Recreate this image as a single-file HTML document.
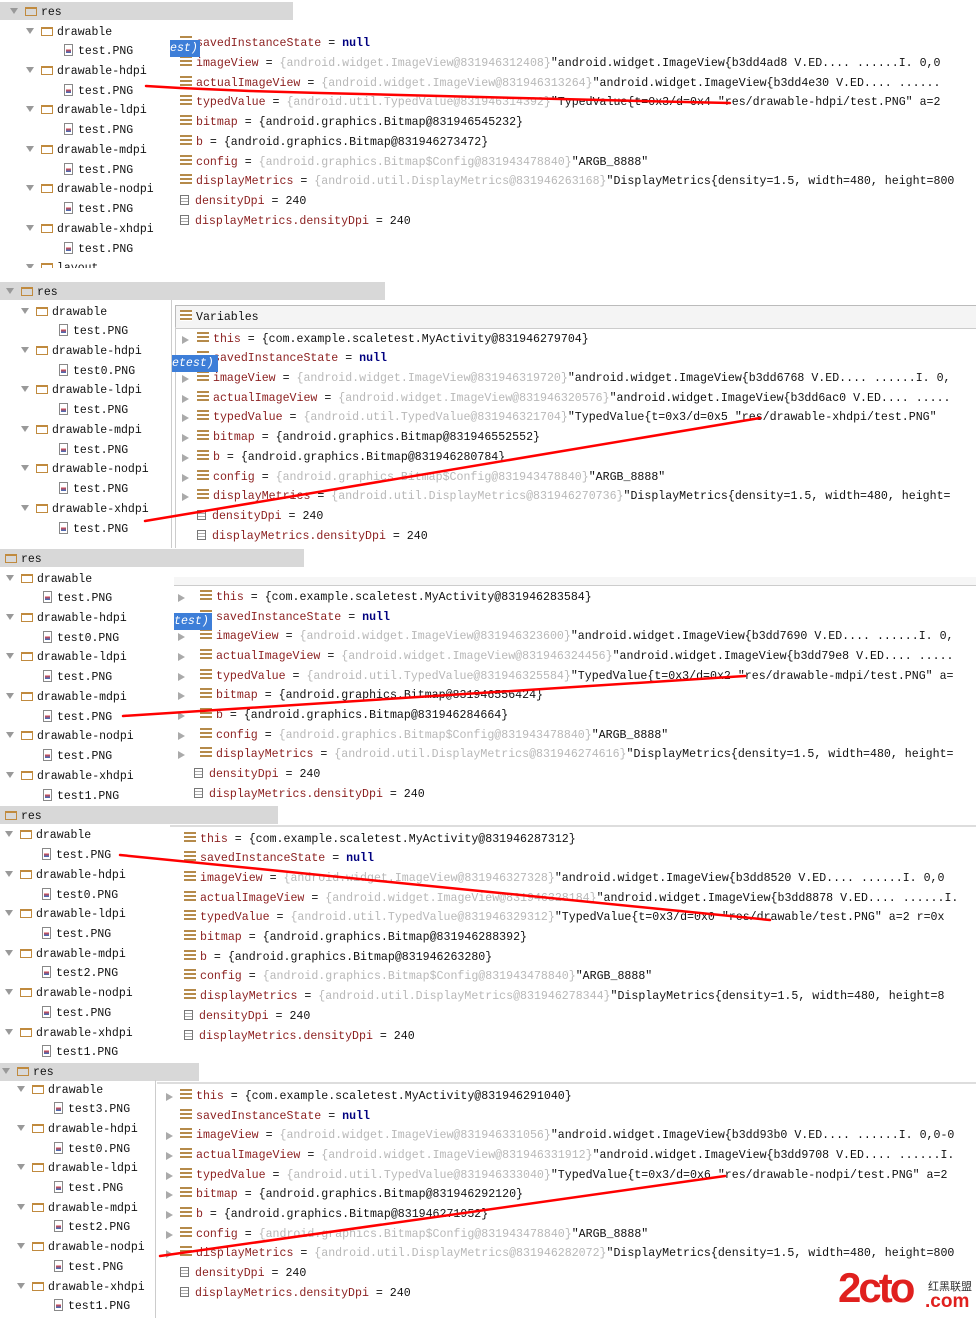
<!DOCTYPE html>
<html><head><meta charset="utf-8"><style>
html,body{margin:0;padding:0;background:#fff;width:976px;height:1318px;overflow:hidden;position:relative}
div{position:absolute}
.t,.r{white-space:pre;font-family:"Liberation Mono","DejaVu Sans Mono",monospace;color:#111;height:16px;line-height:16px;margin-top:2px}
.t{font-size:11.5px}
.r{font-size:11.6px}
.hdr{background:#d8d8d8;height:18px}
.fo{display:inline-block;width:12px;height:9px;border:1.5px solid #c08a3e;border-top-width:2.5px;box-sizing:border-box;vertical-align:-1px;margin-right:4px}
.fi{display:inline-block;width:9px;height:12px;border:1px solid #888;box-sizing:border-box;vertical-align:-2px;margin-right:5px;background:linear-gradient(#fff 45%,#d44 45%,#3a6fc0 80%,#fff 80%);background-size:5px 10px;background-repeat:no-repeat;background-position:1px 0}
.tr{display:inline-block;width:0;height:0;border-left:4px solid transparent;border-right:4px solid transparent;border-top:6px solid #999;margin-right:7px;vertical-align:1px}
.ic{display:inline-block;width:12px;height:11px;background:repeating-linear-gradient(#b58a4a 0 2px,#fff 2px 4px);vertical-align:-1px;margin-right:4px}
.ic2{display:inline-block;width:9px;height:10px;border:1px solid #777;box-sizing:border-box;vertical-align:-1px;margin-right:6px;background:repeating-linear-gradient(#fff 0 2px,#aaa 2px 3px)}
.ar{position:absolute;width:0;height:0;border-top:4px solid transparent;border-bottom:4px solid transparent;border-left:7px solid #aaa;top:4px}
.n{color:#8b1f1f}
.g{color:#b8b8b8}
.k{color:#000080;font-weight:bold}
.blue{background:#3d7ed8;color:#fff;font-style:italic;font-family:"Liberation Mono",monospace;font-size:11.6px;line-height:17px;height:17px;white-space:pre;overflow:hidden}
</style></head><body>

<!-- ============ PANEL 1 ============ -->
<div class="hdr" style="left:0;top:2px;width:293px"></div>
<div class="t" style="left:10px;top:3px"><span class="tr"></span><span class="fo"></span>res</div>
<div class="t" style="left:26px;top:23px"><span class="tr"></span><span class="fo"></span>drawable</div>
<div class="t" style="left:64px;top:42px"><span class="fi"></span>test.PNG</div>
<div class="t" style="left:26px;top:62px"><span class="tr"></span><span class="fo"></span>drawable-hdpi</div>
<div class="t" style="left:64px;top:82px"><span class="fi"></span>test.PNG</div>
<div class="t" style="left:26px;top:101px"><span class="tr"></span><span class="fo"></span>drawable-ldpi</div>
<div class="t" style="left:64px;top:121px"><span class="fi"></span>test.PNG</div>
<div class="t" style="left:26px;top:141px"><span class="tr"></span><span class="fo"></span>drawable-mdpi</div>
<div class="t" style="left:64px;top:161px"><span class="fi"></span>test.PNG</div>
<div class="t" style="left:26px;top:180px"><span class="tr"></span><span class="fo"></span>drawable-nodpi</div>
<div class="t" style="left:64px;top:200px"><span class="fi"></span>test.PNG</div>
<div class="t" style="left:26px;top:220px"><span class="tr"></span><span class="fo"></span>drawable-xhdpi</div>
<div class="t" style="left:64px;top:240px"><span class="fi"></span>test.PNG</div>
<div class="t" style="left:26px;top:259px;height:7px;overflow:hidden"><span class="tr"></span><span class="fo"></span>layout</div>

<div class="r" style="left:180px;top:34px"><span class="ic"></span><span class="n">savedInstanceState</span> = <span class="k">null</span></div>
<div class="r" style="left:180px;top:54px"><span class="ic"></span><span class="n">imageView</span> = <span class="g">{android.widget.ImageView@831946312408}</span>"android.widget.ImageView{b3dd4ad8 V.ED.... ......I. 0,0</div>
<div class="r" style="left:180px;top:74px"><span class="ic"></span><span class="n">actualImageView</span> = <span class="g">{android.widget.ImageView@831946313264}</span>"android.widget.ImageView{b3dd4e30 V.ED.... ......</div>
<div class="r" style="left:180px;top:93px"><span class="ic"></span><span class="n">typedValue</span> = <span class="g">{android.util.TypedValue@831946314392}</span>"TypedValue{t=0x3/d=0x4 "res/drawable-hdpi/test.PNG" a=2</div>
<div class="r" style="left:180px;top:113px"><span class="ic"></span><span class="n">bitmap</span> = {android.graphics.Bitmap@831946545232}</div>
<div class="r" style="left:180px;top:133px"><span class="ic"></span><span class="n">b</span> = {android.graphics.Bitmap@831946273472}</div>
<div class="r" style="left:180px;top:153px"><span class="ic"></span><span class="n">config</span> = <span class="g">{android.graphics.Bitmap$Config@831943478840}</span>"ARGB_8888"</div>
<div class="r" style="left:180px;top:172px"><span class="ic"></span><span class="n">displayMetrics</span> = <span class="g">{android.util.DisplayMetrics@831946263168}</span>"DisplayMetrics{density=1.5, width=480, height=800</div>
<div class="r" style="left:180px;top:192px"><span class="ic2"></span><span class="n">densityDpi</span> = 240</div>
<div class="r" style="left:180px;top:212px"><span class="ic2"></span><span class="n">displayMetrics.densityDpi</span> = 240</div>
<div class="blue" style="left:170px;top:40px;width:30px">est)</div>

<!-- ============ PANEL 2 ============ -->
<div class="hdr" style="left:0;top:282px;width:385px"></div>
<div class="t" style="left:6px;top:283px"><span class="tr"></span><span class="fo"></span>res</div>
<div class="t" style="left:21px;top:303px"><span class="tr"></span><span class="fo"></span>drawable</div>
<div class="t" style="left:59px;top:322px"><span class="fi"></span>test.PNG</div>
<div class="t" style="left:21px;top:342px"><span class="tr"></span><span class="fo"></span>drawable-hdpi</div>
<div class="t" style="left:59px;top:362px"><span class="fi"></span>test0.PNG</div>
<div class="t" style="left:21px;top:381px"><span class="tr"></span><span class="fo"></span>drawable-ldpi</div>
<div class="t" style="left:59px;top:401px"><span class="fi"></span>test.PNG</div>
<div class="t" style="left:21px;top:421px"><span class="tr"></span><span class="fo"></span>drawable-mdpi</div>
<div class="t" style="left:59px;top:441px"><span class="fi"></span>test.PNG</div>
<div class="t" style="left:21px;top:460px"><span class="tr"></span><span class="fo"></span>drawable-nodpi</div>
<div class="t" style="left:59px;top:480px"><span class="fi"></span>test.PNG</div>
<div class="t" style="left:21px;top:500px"><span class="tr"></span><span class="fo"></span>drawable-xhdpi</div>
<div class="t" style="left:59px;top:520px"><span class="fi"></span>test.PNG</div>
<div style="left:171px;top:300px;width:1px;height:248px;background:#ccc"></div>
<div style="left:175px;top:305px;width:801px;height:22px;border-top:1px solid #bbb;border-left:1px solid #bbb;border-bottom:1px solid #ccc;background:#f4f4f4"></div>
<div style="left:175px;top:327px;width:1px;height:221px;background:#ccc"></div>
<div class="r" style="left:180px;top:308px"><span class="ic"></span>Variables</div>
<div class="r" style="left:197px;top:330px"><span class="ar" style="left:-15px"></span><span class="ic"></span><span class="n">this</span> = {com.example.scaletest.MyActivity@831946279704}</div>
<div class="r" style="left:197px;top:349px"><span class="ic"></span><span class="n">savedInstanceState</span> = <span class="k">null</span></div>
<div class="r" style="left:197px;top:369px"><span class="ar" style="left:-15px"></span><span class="ic"></span><span class="n">imageView</span> = <span class="g">{android.widget.ImageView@831946319720}</span>"android.widget.ImageView{b3dd6768 V.ED.... ......I. 0,</div>
<div class="r" style="left:197px;top:389px"><span class="ar" style="left:-15px"></span><span class="ic"></span><span class="n">actualImageView</span> = <span class="g">{android.widget.ImageView@831946320576}</span>"android.widget.ImageView{b3dd6ac0 V.ED.... .....</div>
<div class="r" style="left:197px;top:408px"><span class="ar" style="left:-15px"></span><span class="ic"></span><span class="n">typedValue</span> = <span class="g">{android.util.TypedValue@831946321704}</span>"TypedValue{t=0x3/d=0x5 "res/drawable-xhdpi/test.PNG"</div>
<div class="r" style="left:197px;top:428px"><span class="ar" style="left:-15px"></span><span class="ic"></span><span class="n">bitmap</span> = {android.graphics.Bitmap@831946552552}</div>
<div class="r" style="left:197px;top:448px"><span class="ar" style="left:-15px"></span><span class="ic"></span><span class="n">b</span> = {android.graphics.Bitmap@831946280784}</div>
<div class="r" style="left:197px;top:468px"><span class="ar" style="left:-15px"></span><span class="ic"></span><span class="n">config</span> = <span class="g">{android.graphics.Bitmap$Config@831943478840}</span>"ARGB_8888"</div>
<div class="r" style="left:197px;top:487px"><span class="ar" style="left:-15px"></span><span class="ic"></span><span class="n">displayMetrics</span> = <span class="g">{android.util.DisplayMetrics@831946270736}</span>"DisplayMetrics{density=1.5, width=480, height=</div>
<div class="r" style="left:197px;top:507px"><span class="ic2"></span><span class="n">densityDpi</span> = 240</div>
<div class="r" style="left:197px;top:527px"><span class="ic2"></span><span class="n">displayMetrics.densityDpi</span> = 240</div>
<div class="blue" style="left:172px;top:355px;width:46px">etest)</div>

<!-- ============ PANEL 3 ============ -->
<div class="hdr" style="left:0;top:549px;width:304px"></div>
<div class="t" style="left:5px;top:550px"><span class="fo"></span>res</div>
<div class="t" style="left:6px;top:570px"><span class="tr"></span><span class="fo"></span>drawable</div>
<div class="t" style="left:43px;top:589px"><span class="fi"></span>test.PNG</div>
<div class="t" style="left:6px;top:609px"><span class="tr"></span><span class="fo"></span>drawable-hdpi</div>
<div class="t" style="left:43px;top:629px"><span class="fi"></span>test0.PNG</div>
<div class="t" style="left:6px;top:648px"><span class="tr"></span><span class="fo"></span>drawable-ldpi</div>
<div class="t" style="left:43px;top:668px"><span class="fi"></span>test.PNG</div>
<div class="t" style="left:6px;top:688px"><span class="tr"></span><span class="fo"></span>drawable-mdpi</div>
<div class="t" style="left:43px;top:708px"><span class="fi"></span>test.PNG</div>
<div class="t" style="left:6px;top:727px"><span class="tr"></span><span class="fo"></span>drawable-nodpi</div>
<div class="t" style="left:43px;top:747px"><span class="fi"></span>test.PNG</div>
<div class="t" style="left:6px;top:767px"><span class="tr"></span><span class="fo"></span>drawable-xhdpi</div>
<div class="t" style="left:43px;top:787px"><span class="fi"></span>test1.PNG</div>
<div style="left:174px;top:577px;width:802px;height:8px;border-bottom:1px solid #ccc;background:#f6f6f6"></div>
<div class="r" style="left:209px;top:588px"><span class="ar" style="left:-31px"></span><span class="ic" style="margin-left:-9px"></span><span class="n">this</span> = {com.example.scaletest.MyActivity@831946283584}</div>
<div class="r" style="left:200px;top:608px"><span class="ic"></span><span class="n">savedInstanceState</span> = <span class="k">null</span></div>
<div class="r" style="left:200px;top:627px"><span class="ar" style="left:-22px"></span><span class="ic"></span><span class="n">imageView</span> = <span class="g">{android.widget.ImageView@831946323600}</span>"android.widget.ImageView{b3dd7690 V.ED.... ......I. 0,</div>
<div class="r" style="left:200px;top:647px"><span class="ar" style="left:-22px"></span><span class="ic"></span><span class="n">actualImageView</span> = <span class="g">{android.widget.ImageView@831946324456}</span>"android.widget.ImageView{b3dd79e8 V.ED.... .....</div>
<div class="r" style="left:200px;top:667px"><span class="ar" style="left:-22px"></span><span class="ic"></span><span class="n">typedValue</span> = <span class="g">{android.util.TypedValue@831946325584}</span>"TypedValue{t=0x3/d=0x2 "res/drawable-mdpi/test.PNG" a=</div>
<div class="r" style="left:200px;top:686px"><span class="ar" style="left:-22px"></span><span class="ic"></span><span class="n">bitmap</span> = {android.graphics.Bitmap@831946556424}</div>
<div class="r" style="left:200px;top:706px"><span class="ar" style="left:-22px"></span><span class="ic"></span><span class="n">b</span> = {android.graphics.Bitmap@831946284664}</div>
<div class="r" style="left:200px;top:726px"><span class="ar" style="left:-22px"></span><span class="ic"></span><span class="n">config</span> = <span class="g">{android.graphics.Bitmap$Config@831943478840}</span>"ARGB_8888"</div>
<div class="r" style="left:200px;top:745px"><span class="ar" style="left:-22px"></span><span class="ic"></span><span class="n">displayMetrics</span> = <span class="g">{android.util.DisplayMetrics@831946274616}</span>"DisplayMetrics{density=1.5, width=480, height=</div>
<div class="r" style="left:194px;top:765px"><span class="ic2"></span><span class="n">densityDpi</span> = 240</div>
<div class="r" style="left:194px;top:785px"><span class="ic2"></span><span class="n">displayMetrics.densityDpi</span> = 240</div>
<div class="blue" style="left:174px;top:613px;width:38px">test)</div>

<!-- ============ PANEL 4 ============ -->
<div class="hdr" style="left:0;top:806px;width:278px"></div>
<div class="t" style="left:5px;top:807px"><span class="fo"></span>res</div>
<div class="t" style="left:5px;top:826px"><span class="tr"></span><span class="fo"></span>drawable</div>
<div class="t" style="left:42px;top:846px"><span class="fi"></span>test.PNG</div>
<div class="t" style="left:5px;top:866px"><span class="tr"></span><span class="fo"></span>drawable-hdpi</div>
<div class="t" style="left:42px;top:886px"><span class="fi"></span>test0.PNG</div>
<div class="t" style="left:5px;top:905px"><span class="tr"></span><span class="fo"></span>drawable-ldpi</div>
<div class="t" style="left:42px;top:925px"><span class="fi"></span>test.PNG</div>
<div class="t" style="left:5px;top:945px"><span class="tr"></span><span class="fo"></span>drawable-mdpi</div>
<div class="t" style="left:42px;top:964px"><span class="fi"></span>test2.PNG</div>
<div class="t" style="left:5px;top:984px"><span class="tr"></span><span class="fo"></span>drawable-nodpi</div>
<div class="t" style="left:42px;top:1004px"><span class="fi"></span>test.PNG</div>
<div class="t" style="left:5px;top:1024px"><span class="tr"></span><span class="fo"></span>drawable-xhdpi</div>
<div class="t" style="left:42px;top:1043px"><span class="fi"></span>test1.PNG</div>
<div style="left:170px;top:825px;width:806px;height:2px;background:#ddd"></div>
<div class="r" style="left:184px;top:830px"><span class="ic"></span><span class="n">this</span> = {com.example.scaletest.MyActivity@831946287312}</div>
<div class="r" style="left:184px;top:849px"><span class="ic"></span><span class="n">savedInstanceState</span> = <span class="k">null</span></div>
<div class="r" style="left:184px;top:869px"><span class="ic"></span><span class="n">imageView</span> = <span class="g">{android.widget.ImageView@831946327328}</span>"android.widget.ImageView{b3dd8520 V.ED.... ......I. 0,0</div>
<div class="r" style="left:184px;top:889px"><span class="ic"></span><span class="n">actualImageView</span> = <span class="g">{android.widget.ImageView@831946328184}</span>"android.widget.ImageView{b3dd8878 V.ED.... ......I.</div>
<div class="r" style="left:184px;top:908px"><span class="ic"></span><span class="n">typedValue</span> = <span class="g">{android.util.TypedValue@831946329312}</span>"TypedValue{t=0x3/d=0x0 "res/drawable/test.PNG" a=2 r=0x</div>
<div class="r" style="left:184px;top:928px"><span class="ic"></span><span class="n">bitmap</span> = {android.graphics.Bitmap@831946288392}</div>
<div class="r" style="left:184px;top:948px"><span class="ic"></span><span class="n">b</span> = {android.graphics.Bitmap@831946263280}</div>
<div class="r" style="left:184px;top:967px"><span class="ic"></span><span class="n">config</span> = <span class="g">{android.graphics.Bitmap$Config@831943478840}</span>"ARGB_8888"</div>
<div class="r" style="left:184px;top:987px"><span class="ic"></span><span class="n">displayMetrics</span> = <span class="g">{android.util.DisplayMetrics@831946278344}</span>"DisplayMetrics{density=1.5, width=480, height=8</div>
<div class="r" style="left:184px;top:1007px"><span class="ic2"></span><span class="n">densityDpi</span> = 240</div>
<div class="r" style="left:184px;top:1027px"><span class="ic2"></span><span class="n">displayMetrics.densityDpi</span> = 240</div>

<!-- ============ PANEL 5 ============ -->
<div class="hdr" style="left:0;top:1063px;width:199px"></div>
<div class="t" style="left:2px;top:1063px"><span class="tr"></span><span class="fo"></span>res</div>
<div class="t" style="left:17px;top:1081px"><span class="tr"></span><span class="fo"></span>drawable</div>
<div class="t" style="left:54px;top:1100px"><span class="fi"></span>test3.PNG</div>
<div class="t" style="left:17px;top:1120px"><span class="tr"></span><span class="fo"></span>drawable-hdpi</div>
<div class="t" style="left:54px;top:1140px"><span class="fi"></span>test0.PNG</div>
<div class="t" style="left:17px;top:1159px"><span class="tr"></span><span class="fo"></span>drawable-ldpi</div>
<div class="t" style="left:54px;top:1179px"><span class="fi"></span>test.PNG</div>
<div class="t" style="left:17px;top:1199px"><span class="tr"></span><span class="fo"></span>drawable-mdpi</div>
<div class="t" style="left:54px;top:1218px"><span class="fi"></span>test2.PNG</div>
<div class="t" style="left:17px;top:1238px"><span class="tr"></span><span class="fo"></span>drawable-nodpi</div>
<div class="t" style="left:54px;top:1258px"><span class="fi"></span>test.PNG</div>
<div class="t" style="left:17px;top:1278px"><span class="tr"></span><span class="fo"></span>drawable-xhdpi</div>
<div class="t" style="left:54px;top:1297px"><span class="fi"></span>test1.PNG</div>
<div style="left:155px;top:1080px;width:1px;height:238px;background:#ccc"></div>
<div style="left:157px;top:1082px;width:819px;height:2px;background:#ddd"></div>
<div class="r" style="left:180px;top:1087px"><span class="ar" style="left:-14px"></span><span class="ic"></span><span class="n">this</span> = {com.example.scaletest.MyActivity@831946291040}</div>
<div class="r" style="left:180px;top:1107px"><span class="ic"></span><span class="n">savedInstanceState</span> = <span class="k">null</span></div>
<div class="r" style="left:180px;top:1126px"><span class="ar" style="left:-14px"></span><span class="ic"></span><span class="n">imageView</span> = <span class="g">{android.widget.ImageView@831946331056}</span>"android.widget.ImageView{b3dd93b0 V.ED.... ......I. 0,0-0</div>
<div class="r" style="left:180px;top:1146px"><span class="ar" style="left:-14px"></span><span class="ic"></span><span class="n">actualImageView</span> = <span class="g">{android.widget.ImageView@831946331912}</span>"android.widget.ImageView{b3dd9708 V.ED.... ......I.</div>
<div class="r" style="left:180px;top:1166px"><span class="ar" style="left:-14px"></span><span class="ic"></span><span class="n">typedValue</span> = <span class="g">{android.util.TypedValue@831946333040}</span>"TypedValue{t=0x3/d=0x6 "res/drawable-nodpi/test.PNG" a=2</div>
<div class="r" style="left:180px;top:1185px"><span class="ar" style="left:-14px"></span><span class="ic"></span><span class="n">bitmap</span> = {android.graphics.Bitmap@831946292120}</div>
<div class="r" style="left:180px;top:1205px"><span class="ar" style="left:-14px"></span><span class="ic"></span><span class="n">b</span> = {android.graphics.Bitmap@831946271952}</div>
<div class="r" style="left:180px;top:1225px"><span class="ar" style="left:-14px"></span><span class="ic"></span><span class="n">config</span> = <span class="g">{android.graphics.Bitmap$Config@831943478840}</span>"ARGB_8888"</div>
<div class="r" style="left:180px;top:1244px"><span class="ar" style="left:-14px"></span><span class="ic"></span><span class="n">displayMetrics</span> = <span class="g">{android.util.DisplayMetrics@831946282072}</span>"DisplayMetrics{density=1.5, width=480, height=800</div>
<div class="r" style="left:180px;top:1264px"><span class="ic2"></span><span class="n">densityDpi</span> = 240</div>
<div class="r" style="left:180px;top:1284px"><span class="ic2"></span><span class="n">displayMetrics.densityDpi</span> = 240</div>

<!-- watermark -->
<div style="left:836px;top:1268px;width:140px;height:45px;background:#fff"></div>
<div style="left:838px;top:1266px;font:bold 42px/44px 'Liberation Sans',sans-serif;color:#e0201e;letter-spacing:-3px">2cto</div>
<div style="left:928px;top:1281px;font:11px/12px 'Liberation Sans','Noto Sans CJK SC',sans-serif;color:#333">红黑联盟</div>
<div style="left:925px;top:1292px;font:bold 19px/20px 'Liberation Sans',sans-serif;color:#e0201e">.com</div>

<!-- red annotation lines -->
<svg style="position:absolute;left:0;top:0" width="976" height="1318">
<g stroke="#f00" stroke-width="2.5" fill="none" stroke-linecap="round">
<polyline points="146,86 180,88 250,91 320,93 400,95 480,97 560,99 640,101 730,103"/>
<line x1="145" y1="521" x2="760" y2="418"/>
<line x1="123" y1="716" x2="745" y2="676"/>
<line x1="120" y1="855" x2="770" y2="920"/>
<line x1="160" y1="1256" x2="725" y2="1176"/>
</g>
</svg>
</body></html>
